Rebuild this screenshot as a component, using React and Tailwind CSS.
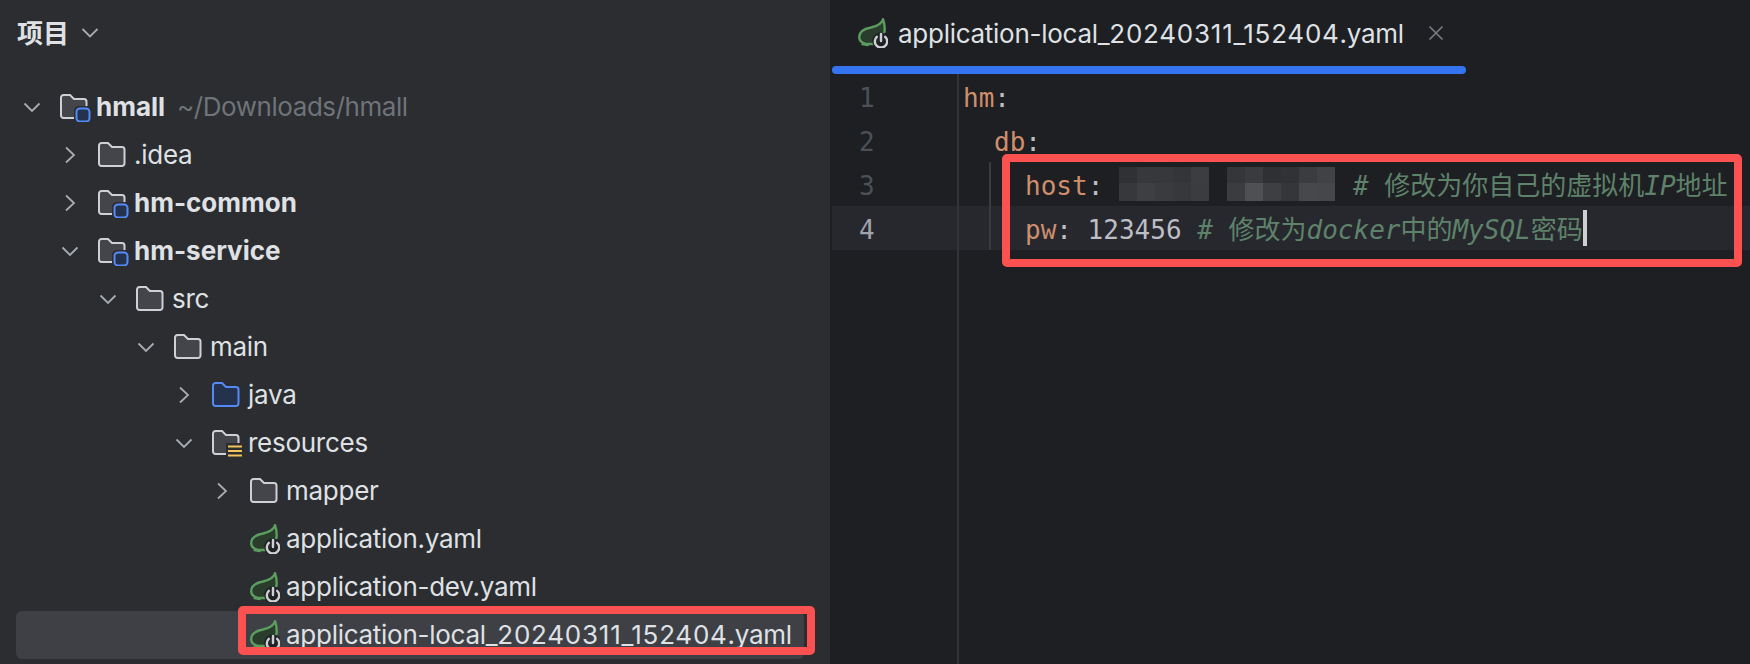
const MOSAIC = [
  ["#2f3135", "#36383c", "#36383c", "#333539", "#3b3d41", "", "#343639", "#393b3f", "#2e3034", "#303236", "#3a3c40", "#404246"],
  ["#36383c", "#3d3f43", "#393b3f", "#36383c", "#3a3c40", "", "#3a3c40", "#4e5054", "#3d3f43", "#34363a", "#46484c", "#45474b"],
];

function Mosaic() {
  return (
    <svg width="216" height="36" viewBox="0 0 216 36" className="-mt-1 shrink-0">
      {MOSAIC.map((row, r) =>
        row.map((c, i) => (c ? <rect key={`${r}-${i}`} x={i * 18} y={r === 0 ? 1 : 17} width="18" height={r === 0 ? 16 : 18} fill={c} /> : null))
      )}
    </svg>
  );
}

function Leaf() {
  return (
    <svg width="30" height="30" viewBox="0 0 30 30" fill="none" className="shrink-0">
      <path d="M25 1.2C24 6 19 8 13 9.5C5 11 1.2 14 1.2 19C1.2 23 4 25 8 26L17 26L26.5 14C27 9 26.5 5 25 1.2Z" fill="#2a3d2c" stroke="#5c9e5f" strokeWidth="2.4" strokeLinejoin="round" />
      <path d="M4 26.5L10 27.5" stroke="#5c9e5f" strokeWidth="1.5" strokeLinecap="round" />
      <circle cx="23" cy="23" r="8.8" fill="#1e1f22" opacity="0.9" />
      <path d="M18.8 18.8A6.2 6.2 0 1 0 27.2 18.8" stroke="#ced0d6" strokeWidth="2.4" strokeLinecap="round" />
      <path d="M23 16V23" stroke="#ced0d6" strokeWidth="2.4" strokeLinecap="round" />
    </svg>
  );
}

function Folder({ kind = "plain" }) {
  const blue = kind === "source";
  const stroke = blue ? "#548af7" : "#ced0d6";
  const fill = blue ? "#25324d" : "#43454a";
  return (
    <svg width="32" height="30" viewBox="0 0 32 30" fill="none" className="shrink-0">
      <path d="M3.5 3H10L14 7H24A2.5 2.5 0 0 1 26.5 9.5V23.5A2.5 2.5 0 0 1 24 26H3.5A2.5 2.5 0 0 1 1 23.5V5.5A2.5 2.5 0 0 1 3.5 3Z" fill={fill} stroke={stroke} strokeWidth="2" />
      {kind === "module" && (
        <>
          <rect x="14" y="14" width="18" height="18" rx="5" fill="#2b2d30" />
          <rect x="16.5" y="16.5" width="13" height="13" rx="3.5" fill="#25324d" stroke="#548af7" strokeWidth="2" />
        </>
      )}
      {kind === "resources" && (
        <>
          <rect x="14" y="15" width="18" height="15" fill="#2b2d30" />
          <path d="M16 18.5H30M16 23H30M16 27.5H30" stroke="#f2c55c" strokeWidth="2.2" />
        </>
      )}
    </svg>
  );
}

function Chevron({ open }) {
  return (
    <svg width="20" height="20" viewBox="0 0 20 20" fill="none" className="shrink-0">
      <path d={open ? "M2.5 6.5L10 14L17.5 6.5" : "M6 2.5L14 10L6 17.5"} stroke="#a8abb0" strokeWidth="1.8" />
    </svg>
  );
}

function LongName() {
  return (
    <>
      application-local_<span className="tracking-[0.75px]">20240311_152404</span>.yaml
    </>
  );
}

const DEPTH = ["pl-[6px]", "pl-[44px]", "pl-[82px]", "pl-[120px]", "pl-[158px]", "pl-[196px]"];

const TREE = [
  { d: 0, open: true, icon: "module", name: "hmall", bold: true, path: "~/Downloads/hmall" },
  { d: 1, open: false, icon: "plain", name: ".idea" },
  { d: 1, open: false, icon: "module", name: "hm-common", bold: true },
  { d: 1, open: true, icon: "module", name: "hm-service", bold: true },
  { d: 2, open: true, icon: "plain", name: "src" },
  { d: 3, open: true, icon: "plain", name: "main" },
  { d: 4, open: false, icon: "source", name: "java" },
  { d: 4, open: true, icon: "resources", name: "resources" },
  { d: 5, open: false, icon: "plain", name: "mapper" },
  { d: 5, icon: "leaf", name: "application.yaml" },
  { d: 5, icon: "leaf", name: "application-dev.yaml" },
  { d: 5, icon: "leaf", name: <LongName />, id: "local", selected: true },
];

function TreeRow({ item }) {
  return (
    <div className={`relative flex h-12 w-[788px] items-center ${DEPTH[item.d]} ${item.selected ? "rounded-md bg-[#3e4045]" : ""}`}>
      <div className="flex w-[38px] shrink-0 items-center">{item.open !== undefined && <Chevron open={item.open} />}</div>
      <div className="flex w-9 shrink-0 items-center">{item.icon === "leaf" ? <Leaf /> : <Folder kind={item.icon} />}</div>
      <span className={`whitespace-pre pb-0.5 text-[26px] text-[#dfe1e5] ${item.bold ? "font-bold" : "tracking-[-0.27px]"}`}>{item.name}</span>
      {item.path && <span className="ml-3 whitespace-pre pb-0.5 text-[26px] tracking-[-0.45px] text-[#6f737a]">{item.path}</span>}
      {item.selected && <div className="absolute left-[222px] top-[-5px] h-[49px] w-[577px] rounded-[5px] border-[8px] border-[#fb5151]" />}
    </div>
  );
}

function Key({ children }) {
  return <span className="text-[#cf8e6d]">{children}</span>;
}
function Punct({ children }) {
  return <span className="text-[#bcbec4]">{children}</span>;
}
function Cm({ children, it }) {
  return <span className={`text-[#5f826b] ${it ? "italic" : ""}`}>{children}</span>;
}

function Line({ n, current, guide, children }) {
  return (
    <div className={`flex h-11 items-center ${current ? "bg-[#26282e]" : ""}`}>
      <div className={`flex h-full w-[127px] shrink-0 items-center border-r-2 border-[#313438] pl-[27px] pt-1 ${current ? "text-[#a1a3ab]" : "text-[#4b5059]"}`}>{n}</div>
      {guide ? (
        <div className="ml-[30px] flex h-full items-center border-l-2 border-[#393b40] pl-[34px] pt-1">{children}</div>
      ) : (
        <div className="flex h-full items-center pt-1">{children}</div>
      )}
    </div>
  );
}

export default function App() {
  return (
    <div className="flex h-[664px] w-[1750px] overflow-hidden bg-[#1e1f22] [font-family:'Inter','Noto_Sans_CJK_SC',sans-serif]">
      <aside className="w-[830px] shrink-0 bg-[#2b2d30]">
        <header className="flex h-[66px] items-center pl-[17px]">
          <span className="text-[26px] font-semibold text-[#dfe1e5]">项目</span>
          <svg width="18" height="12" viewBox="0 0 18 12" fill="none" className="ml-3">
            <path d="M1.5 2L9 9.5L16.5 2" stroke="#a8abb0" strokeWidth="1.8" />
          </svg>
        </header>
        <div className="pl-4 pt-[17px]">
          {TREE.map((item) => (
            <TreeRow key={item.id || item.name} item={item} />
          ))}
        </div>
      </aside>
      <main className="flex min-w-0 flex-1 flex-col pl-0.5">
        <div className="flex h-[66px] items-center pl-[26px]">
          <Leaf />
          <span className="ml-2.5 whitespace-pre text-[26px] tracking-[-0.27px] text-[#dfe1e5]"><LongName /></span>
          <svg width="16" height="16" viewBox="0 0 16 16" fill="none" className="ml-[24px]">
            <path d="M1.5 1.5L14.5 14.5M14.5 1.5L1.5 14.5" stroke="#7a7d83" strokeWidth="1.6" />
          </svg>
        </div>
        <div className="h-2 w-[634px] rounded-full bg-[#3574f0]" />
        <div className="relative flex flex-1 flex-col whitespace-pre text-[26px] [font-family:'DejaVu_Sans_Mono','Noto_Sans_CJK_SC',monospace]">
          <Line n="1">
            <span className="pl-1"><Key>hm</Key><Punct>:</Punct></span>
          </Line>
          <Line n="2">
            <span className="pl-[35px]"><Key>db</Key><Punct>:</Punct></span>
          </Line>
          <Line n="3" guide>
            <Key>host</Key><Punct>: </Punct>
            <Mosaic />
            <span className="w-[18px]" />
            <Cm it># </Cm><Cm>修改为你自己的虚拟机</Cm><Cm it>IP</Cm><Cm>地址</Cm>
          </Line>
          <Line n="4" current guide>
            <Key>pw</Key><Punct>: 123456 </Punct>
            <Cm it># </Cm><Cm>修改为</Cm><Cm it>docker</Cm><Cm>中的</Cm><Cm it>MySQL</Cm><Cm>密码</Cm>
            <span className="-mt-1 h-9 w-1 bg-[#ced0d6]" />
          </Line>
          <div className="flex flex-1">
            <div className="w-[127px] border-r-2 border-[#313438]" />
          </div>
          <div className="absolute left-[170px] top-[80px] h-[113px] w-[740px] rounded-[5px] border-[8px] border-[#fb5151]" />
        </div>
      </main>
    </div>
  );
}
